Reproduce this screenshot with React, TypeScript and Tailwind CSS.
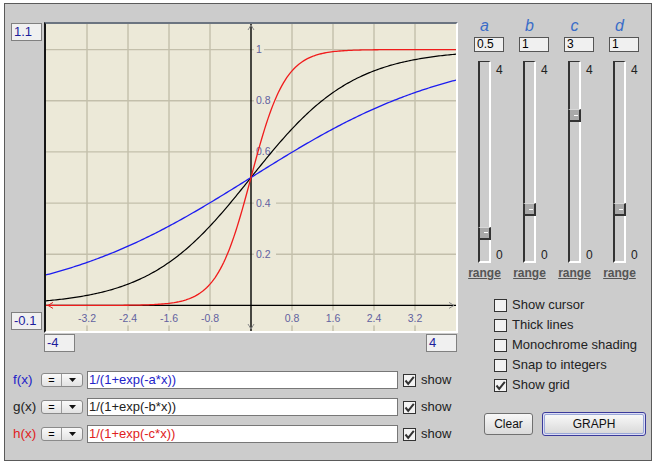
import React from 'react';

const W = 410;
const H = 307;
const sx = (x: number) => ((x + 4) / 8) * W;
const sy = (y: number) => ((1.1 - y) / 1.2) * H;

const curve = (k: number) => {
  const pts: string[] = [];
  for (let i = 0; i <= 240; i++) {
    const x = -4 + (8 * i) / 240;
    pts.push(`${sx(x).toFixed(2)},${sy(1 / (1 + Math.exp(-k * x))).toFixed(2)}`);
  }
  return pts.join(' ');
};

const gridX = [-3.2, -2.4, -1.6, -0.8, 0.8, 1.6, 2.4, 3.2];
const gridY = [0.2, 0.4, 0.6, 0.8, 1];

const params = [
  { n: 'a', v: '0.5', k: 0.5 },
  { n: 'b', v: '1', k: 1 },
  { n: 'c', v: '3', k: 3 },
  { n: 'd', v: '1', k: 1 },
];

const funcs = [
  { label: 'f(x)', expr: '1/(1+exp(-a*x))', color: 'text-[#2323c8]' },
  { label: 'g(x)', expr: '1/(1+exp(-b*x))', color: 'text-[#222]' },
  { label: 'h(x)', expr: '1/(1+exp(-c*x))', color: 'text-[#e02222]' },
];

const options = [
  { label: 'Show cursor', on: false },
  { label: 'Thick lines', on: false },
  { label: 'Monochrome shading', on: false },
  { label: 'Snap to integers', on: false },
  { label: 'Show grid', on: true },
];

const Check = ({ on }: { on: boolean }) => (
  <div className="w-[13px] h-[13px] border border-[#333] bg-[#f3f3f3] flex items-center justify-center shrink-0">
    {on && (
      <svg width="11" height="11" viewBox="0 0 11 11">
        <path d="M1.5 5.5 L4.2 8.8 L9.8 1.8" fill="none" stroke="#333" strokeWidth="2" />
      </svg>
    )}
  </div>
);

const Plot = () => {
  const x0 = sx(0);
  const y0 = sy(0);
  return (
    <div className="w-[414px] h-[311px] border-t-2 border-l-2 border-r-2 border-b-2 border-t-[#6b7480] border-l-[#151515] border-r-white border-b-white bg-[#ece9d8]">
      <svg width={W} height={H} className="block">
        {gridX.map((v) => (
          <line key={'gx' + v} x1={sx(v)} x2={sx(v)} y1={0} y2={H} stroke="#c3bfab" strokeWidth={1.4} />
        ))}
        {gridY.map((v) => (
          <line key={'gy' + v} x1={0} x2={W} y1={sy(v)} y2={sy(v)} stroke="#c3bfab" strokeWidth={1.4} />
        ))}
        {gridY.map((v) => {
          const t = String(v);
          return (
            <g key={'ly' + v}>
              <rect x={x0 + 3} y={sy(v) - 6} width={t.length * 6 + 4} height={12} fill="#ece9d8" />
              <text x={x0 + 5} y={sy(v) + 3.5} fontSize={10.5} fill="#6262a0" fontFamily="Liberation Sans, Arial, sans-serif">
                {t}
              </text>
            </g>
          );
        })}
        {gridX.map((v) => {
          const t = String(v);
          return (
            <g key={'lx' + v}>
              <rect x={sx(v) - 11} y={y0 + 5} width={22} height={15} fill="#ece9d8" />
              <text x={sx(v)} y={y0 + 16.5} fontSize={10.5} textAnchor="middle" fill="#6262a0" fontFamily="Liberation Sans, Arial, sans-serif">
                {t}
              </text>
            </g>
          );
        })}
        <line x1={x0} x2={x0} y1={0} y2={H} stroke="#000" strokeWidth={1.4} />
        <line x1={0} x2={W} y1={y0} y2={y0} stroke="#000" strokeWidth={1.4} />
        <path d={`M${x0 - 3} 6 L${x0} 1 L${x0 + 3} 6`} fill="none" stroke="#8a8a8a" strokeWidth={1} />
        <path d={`M${x0 - 3} ${H - 7} L${x0} ${H - 2} L${x0 + 3} ${H - 7}`} fill="none" stroke="#8a8a8a" strokeWidth={1} />
        <path d={`M${W - 7} ${y0 - 3} L${W - 2} ${y0} L${W - 7} ${y0 + 3}`} fill="none" stroke="#8a8a8a" strokeWidth={1} />
        <path d={`M7 ${y0 - 3} L2 ${y0} L7 ${y0 + 3}`} fill="none" stroke="#e02222" strokeWidth={1} />
        <polyline points={curve(1)} fill="none" stroke="#000" strokeWidth={1.2} />
        <polyline points={curve(0.5)} fill="none" stroke="#1c1cf0" strokeWidth={1.3} />
        <polyline points={curve(3)} fill="none" stroke="#f01c1c" strokeWidth={1.3} />
      </svg>
    </div>
  );
};

const RangeBox = ({ text }: { text: string }) => (
  <div className="w-[31px] h-[18px] border border-[#808080] bg-[#f0f0f0] text-[13px] leading-[16px] pl-[2px] text-[#1c1c9c]">{text}</div>
);

export default function App() {
  return (
    <div className="w-[656px] h-[464px] bg-white pt-[3px] pl-[4px] font-['Liberation_Sans',Arial,sans-serif]">
      <div className="w-[648px] h-[458px] border border-[#5a5a5a] bg-[#cccccc] flex">
        {/* left: plot + functions */}
        <div className="w-[457px] pl-[6px] pt-[18px]">
          <div className="flex">
            <div className="w-[31px] mr-[2px] flex flex-col justify-between pt-[1px] pb-[3px]">
              <RangeBox text="1.1" />
              <RangeBox text="-0.1" />
            </div>
            <Plot />
          </div>
          <div className="mt-[1px] ml-[33px] w-[413px] flex justify-between">
            <RangeBox text="-4" />
            <RangeBox text="4" />
          </div>
          <div className="mt-[19px] flex flex-col gap-[9px]">
            {funcs.map((f) => (
              <div key={f.label} className="h-[18px] flex items-center">
                <div className={`w-[30px] pl-[2px] text-[13.5px] ${f.color}`}>{f.label}</div>
                <div className="w-[42px] h-[14px] flex border border-[#8a8a8a] rounded-[3px] bg-gradient-to-b from-[#fafafa] to-[#e2e2e2]">
                  <div className="w-[20px] border-r border-[#9a9a9a] flex items-center justify-center text-[11px] leading-none text-black">=</div>
                  <div className="flex-1 flex items-center justify-center">
                    <svg width="7" height="4" viewBox="0 0 7 4">
                      <path d="M0 0 L7 0 L3.5 4 Z" fill="#111" />
                    </svg>
                  </div>
                </div>
                <div className={`ml-[4px] w-[311px] h-[18px] border border-[#777] bg-white text-[13px] leading-[16px] pl-[1px] ${f.color}`}>{f.expr}</div>
                <div className="ml-[5px]">
                  <Check on />
                </div>
                <div className="ml-[5px] text-[13px] text-[#222]">show</div>
              </div>
            ))}
          </div>
        </div>
        {/* right: parameters + options */}
        <div className="flex-1 pt-[13px]">
          <div className="flex">
            {params.map((p) => (
              <div key={p.n} className="w-[45px] flex flex-col">
                <div className="h-[18px] leading-[18px] text-[16px] italic text-[#3a6cc8] text-center">{p.n}</div>
                <div className="mt-[2px] ml-[12px] w-[30px] h-[15px] border border-[#555] bg-[#f0f0f0] text-[12px] leading-[13px] pl-[2px] text-black">{p.v}</div>
                <div className="mt-[9px] ml-[16px] flex">
                  <div className="relative w-[13px] h-[202px] border-l-2 border-t border-r-2 border-b-2 border-l-[#333] border-t-[#333] border-r-white border-b-white">
                    <div
                      className="absolute -left-[2px] w-[13px] h-[13px] bg-[#a9a9a9] border-t border-t-[#d8d8d8] border-l-2 border-l-[#333] border-r-2 border-r-[#333] border-b-2 border-b-[#333] flex items-center"
                      style={{ top: 188 - 47 * p.k }}
                    >
                      <div className="ml-[4px] w-[4px] h-[1px] bg-white" />
                    </div>
                  </div>
                  <div className="ml-[5px] h-[202px] flex flex-col justify-between pt-[2px] pb-[1px] text-[12px] leading-[14px] text-[#222]">
                    <span>4</span>
                    <span>0</span>
                  </div>
                </div>
                <div className="mt-[3px] text-center text-[12px] leading-[14px] font-bold underline text-[#555]">range</div>
              </div>
            ))}
          </div>
          <div className="mt-[15px] pl-[32px] flex flex-col">
            {options.map((o) => (
              <div key={o.label} className="h-[20px] flex items-center gap-[5px]">
                <Check on={o.on} />
                <span className="text-[13px] text-[#222]">{o.label}</span>
              </div>
            ))}
          </div>
          <div className="mt-[17px] flex items-center">
            <button className="ml-[22px] w-[49px] h-[22px] border border-[#707070] rounded-[3px] bg-gradient-to-b from-[#f8f8f8] to-[#dadada] text-[12px] text-[#111]">
              Clear
            </button>
            <button className="ml-[9px] w-[104px] h-[24px] border border-[#3a3a9a] rounded-[3px] p-[1px] bg-[#dcdcf4]">
              <div className="w-full h-full border border-[#9aa8d8] rounded-[2px] bg-gradient-to-b from-[#f8f8f8] to-[#dadada] flex items-center justify-center text-[12px] text-[#111]">
                GRAPH
              </div>
            </button>
          </div>
        </div>
      </div>
    </div>
  );
}
